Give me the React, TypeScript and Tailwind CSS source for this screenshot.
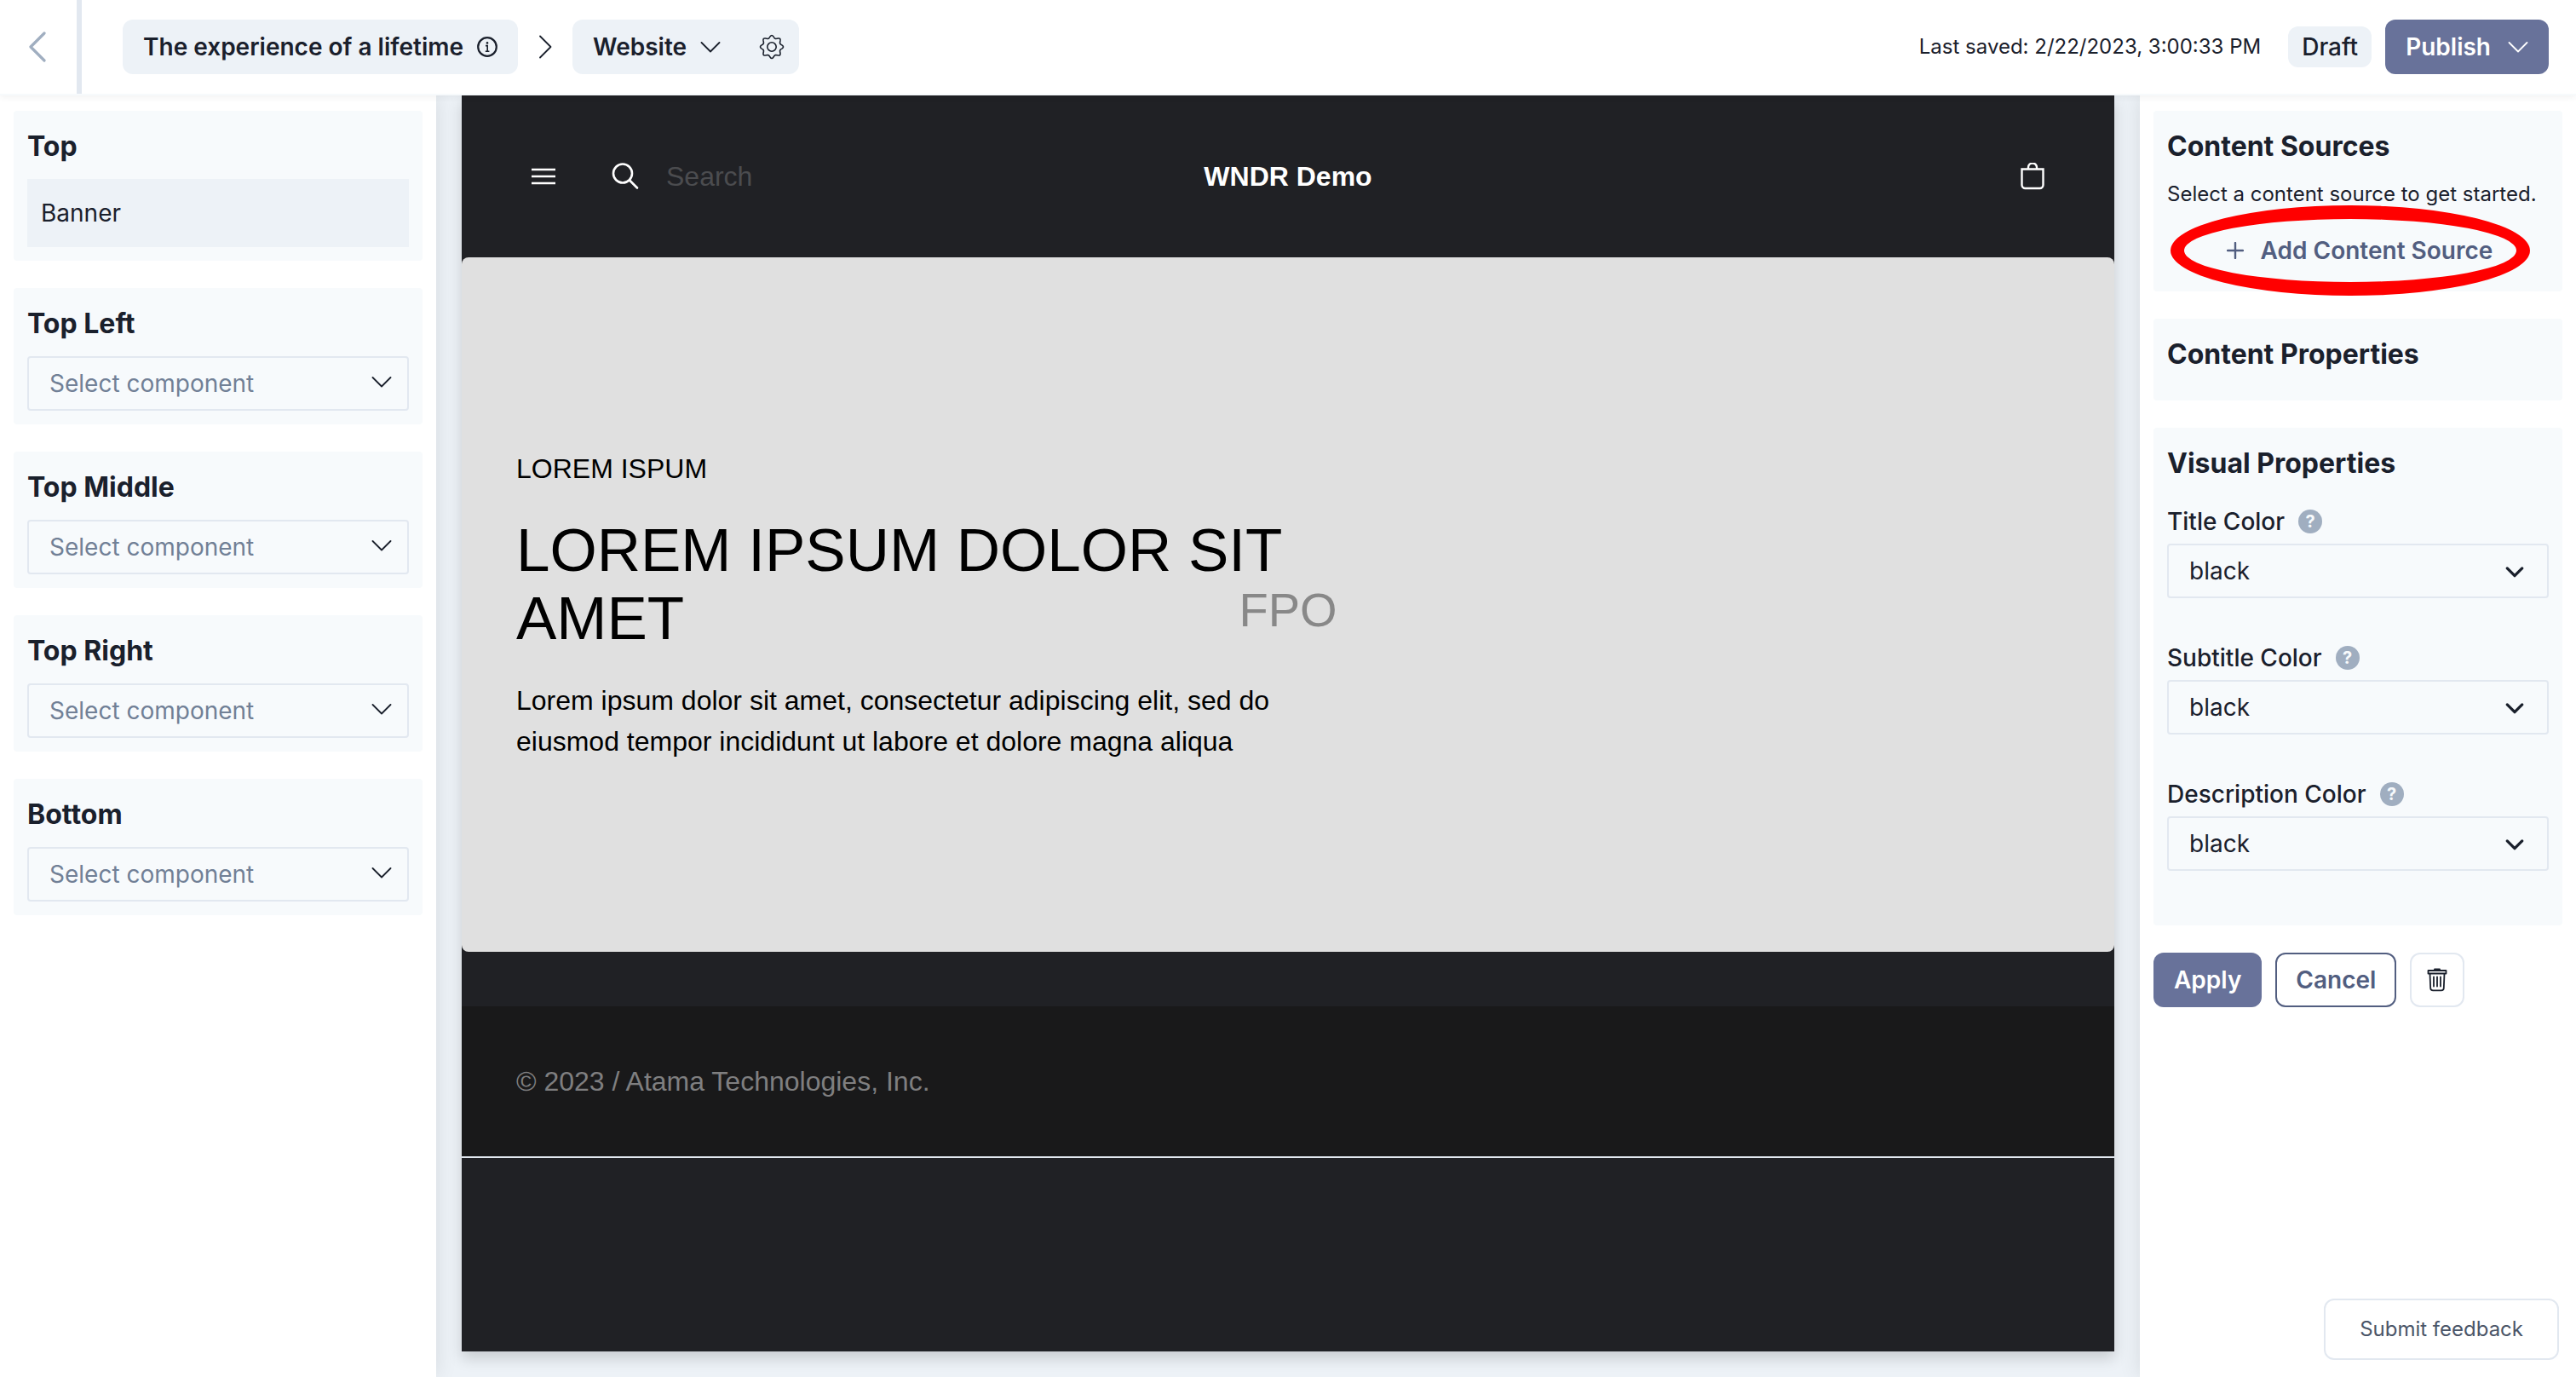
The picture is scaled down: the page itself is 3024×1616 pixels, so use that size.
import React from "react";

const HELVETICA = "font-['Liberation_Sans',Arial,sans-serif]";

function Chevron({ className, w }: { className: string; w: string }) {
  return (
    <svg aria-hidden="true" viewBox="0 0 24 13" fill="none" stroke="currentColor" strokeWidth={w} strokeLinecap="round" strokeLinejoin="round" className={className}>
      <path d="M1.500 1l10.500 10.500L22.500 1" />
    </svg>
  );
}

function Gear() {
  const pts: string[] = [];
  const n = 8;
  for (let i = 0; i < n; i++) {
    const a = (i * 2 * Math.PI) / n;
    const p = (r: number, d: number) => `${(16 + r * Math.sin(a + d)).toFixed(2)} ${(16 - r * Math.cos(a + d)).toFixed(2)}`;
    pts.push(`${i === 0 ? "M" : "L"}${p(10.6, -0.33)}Q${p(11.6, -0.2)} ${p(12.4, -0.15)}Q${p(14.8, 0)} ${p(12.4, 0.15)}Q${p(11.6, 0.2)} ${p(10.6, 0.33)}`);
  }
  return (
    <svg aria-hidden="true" viewBox="0 0 32 32" className="size-8" fill="none" stroke="currentColor" strokeWidth="1.6" strokeLinejoin="round">
      <path d={pts.join("") + "Z"} />
      <circle cx="16" cy="16" r="5.2" />
    </svg>
  );
}

function Card({ title, children, className = "" }: { title: string; children?: React.ReactNode; className?: string }) {
  return (
    <section className={`rounded bg-[#f7fafc] px-4 pt-4 ${className}`}>
      <h2 className="text-[32px] leading-[52px] font-bold">{title}</h2>
      {children}
    </section>
  );
}

function SlotCard({ title }: { title: string }) {
  return (
    <Card title={title} className="pb-4">
      <div className="relative mt-3">
        <select aria-label={title} className="h-16 w-full appearance-none rounded border-2 border-[#e2e8f0] bg-transparent px-6 text-[28px] text-[#718096]">
          <option>Select component</option>
        </select>
        <Chevron w="1.8" className="pointer-events-none absolute top-6 right-5 h-[13px] w-6" />
      </div>
    </Card>
  );
}

function ColorField({ label }: { label: string }) {
  const id = label.toLowerCase().replace(" ", "-");
  return (
    <div className="mb-11">
      <div className="flex h-[52px] items-center gap-4">
        <label htmlFor={id} className="text-[28px] font-medium">{label}</label>
        <button type="button" aria-label={`About ${label}`} className="flex size-7 items-center justify-center rounded-full bg-[#a0aec0] text-xl font-bold text-[#f7fafc]">?</button>
      </div>
      <div className="relative">
        <select id={id} className="h-16 w-full appearance-none rounded border-2 border-[#e2e8f0] bg-transparent px-6 text-[28px]">
          <option>black</option>
          <option>white</option>
        </select>
        <Chevron w="4" className="pointer-events-none absolute top-7 right-[30px] h-[11px] w-5 overflow-visible" />
      </div>
    </div>
  );
}

function Header() {
  return (
    <header className="relative z-10 flex h-28 items-center border-b-2 border-[#f7fafc] bg-white pr-8 shadow-[0_2px_8px_rgba(0,0,0,0.06)]">
      <a href="#back" aria-label="Back" className="flex h-full w-24 shrink-0 items-center justify-center border-r-6 border-[#e2e8f0] text-[#a0aec0]">
        <svg aria-hidden="true" viewBox="0 0 22 36" className="h-9 w-[22px]" fill="none" stroke="currentColor" strokeWidth="3.2" strokeLinecap="round" strokeLinejoin="round">
          <path d="M18 2L2 18l16 16" />
        </svg>
      </a>
      <nav aria-label="Breadcrumb" className="ml-12 flex items-center text-[28px] font-semibold">
        <button type="button" className="flex h-16 items-center gap-4 rounded-xl bg-[#edf2f7] px-6">
          The experience of a lifetime
          <svg aria-hidden="true" viewBox="0 0 24 24" className="size-6" fill="none" stroke="currentColor" strokeWidth="2.2">
            <circle cx="12" cy="12" r="10.8" />
            <path d="M10 10.600h2.200v6.600M9.800 17.200h4.600" strokeWidth="1.600" />
            <circle cx="12" cy="7.400" r="1.300" fill="currentColor" stroke="none" />
          </svg>
        </button>
        <svg aria-hidden="true" viewBox="0 0 16 28" className="mx-6 h-7 w-4" fill="none" stroke="currentColor" strokeWidth="1.8" strokeLinecap="round" strokeLinejoin="round">
          <path d="M2 1.500l12.500 12.500L2 26.500" />
        </svg>
        <div className="flex h-16 items-center rounded-xl bg-[#edf2f7] pr-4 pl-6">
          <button type="button" className="flex items-center gap-4">
            Website
            <Chevron w="1.8" className="h-[13px] w-6" />
          </button>
          <button type="button" aria-label="Settings" className="ml-11"><Gear /></button>
        </div>
      </nav>
      <div className="ml-auto flex items-center text-[28px]">
        <p className="text-2xl">Last saved: 2/22/2023, 3:00:33 PM</p>
        <span className="ml-8 flex h-12 items-center rounded-xl bg-[#edf2f7] px-4 font-medium">Draft</span>
        <button type="button" className="ml-4 flex h-16 items-center gap-5 rounded-xl bg-[#68729a] px-6 font-semibold text-white">
          Publish
          <Chevron w="1.8" className="h-[13px] w-6" />
        </button>
      </div>
    </header>
  );
}

function Preview() {
  return (
    <div className={`flex flex-1 flex-col bg-[#202125] text-[32px] shadow-[0_8px_16px_rgba(0,0,0,0.16)] ${HELVETICA}`}>
      <div className="grid h-[190px] grid-cols-3 items-center px-20 text-white">
        <div className="flex items-center">
          <button type="button" aria-label="Menu">
            <svg aria-hidden="true" viewBox="0 0 32 32" className="size-8" stroke="currentColor" strokeWidth="2.5">
              <path d="M2 8h28M2 16h28M2 24h28" />
            </svg>
          </button>
          <svg aria-hidden="true" viewBox="0 0 32 32" className="ml-16 size-8" fill="none" stroke="currentColor" strokeWidth="2.6" strokeLinecap="round">
            <circle cx="13" cy="12.500" r="11" />
            <path d="M21 20.500l9 9" />
          </svg>
          <input type="search" aria-label="Search" placeholder="Search" className="ml-8 w-60 bg-transparent outline-none placeholder:text-[#4b4c4f]" />
        </div>
        <p className="text-center font-bold">WNDR Demo</p>
        <button type="button" aria-label="Shopping bag" className="justify-self-end">
          <svg aria-hidden="true" viewBox="0 0 32 32" className="size-8" fill="none" stroke="currentColor" strokeWidth="2.4">
            <path d="M3.500 7.500h25v18.500a4 4 0 0 1-4 4h-17a4 4 0 0 1-4-4zM11 7.500V5.500a5 5 0 0 1 10 0v2" />
          </svg>
        </button>
      </div>
      <div className="relative flex h-[815px] flex-col justify-center rounded-lg bg-[#e0e0e0] px-16 text-black">
        <p className="absolute inset-0 flex items-center justify-center pt-3 text-[56px] leading-none text-[#888888]">FPO</p>
        <div className="relative w-[52%]">
          <p className="leading-12">LOREM ISPUM</p>
          <h1 className="mt-8 text-[71px] leading-20">LOREM IPSUM DOLOR SIT AMET</h1>
          <p className="mt-8 leading-12">Lorem ipsum dolor sit amet, consectetur adipiscing elit, sed do eiusmod tempor incididunt ut labore et dolore magna aliqua</p>
        </div>
      </div>
      <footer className="mt-16 flex h-[178px] items-center border-b-2 border-[#e2e8f0] bg-[#19191a] px-16 text-[#7f7f80]">
        © 2023 / Atama Technologies, Inc.
      </footer>
    </div>
  );
}

export default function App() {
  return (
    <div className="flex min-h-screen flex-col bg-white font-[Inter,sans-serif] text-[#1a202c]">
      <Header />
      <div className="flex flex-1">
        <aside className="relative flex w-[512px] shrink-0 flex-col gap-8 bg-white px-4 py-[18px] shadow-[0_0_24px_rgba(0,0,0,0.1)]">
          <Card title="Top" className="pb-4">
            <button type="button" className="mt-3 h-20 w-full bg-[#edf2f7] px-4 text-left text-[28px]">Banner</button>
          </Card>
          <SlotCard title="Top Left" />
          <SlotCard title="Top Middle" />
          <SlotCard title="Top Right" />
          <SlotCard title="Bottom" />
        </aside>
        <main className="flex min-w-0 flex-1 flex-col bg-[#edf2f7] px-[30px] pb-[30px]">
          <Preview />
        </main>
        <aside className="relative flex w-[512px] shrink-0 flex-col gap-8 bg-white px-4 py-[18px] shadow-[0_0_24px_rgba(0,0,0,0.1)]">
          <Card title="Content Sources" className="pb-4">
            <p className="mt-2.5 text-2xl leading-10">Select a content source to get started.</p>
            <div className="relative mt-3.5">
              <button type="button" className="flex h-16 w-full items-center justify-center gap-5 pl-1 text-[28px] font-semibold text-[#525e80]">
                <svg aria-hidden="true" viewBox="0 0 20 20" className="size-5" stroke="currentColor" strokeWidth="2.4" strokeLinecap="round">
                  <path d="M10 1v18M1 10h18" />
                </svg>
                Add Content Source
              </button>
              <span className="pointer-events-none absolute -inset-y-[21px] left-1 w-[422px] rounded-[50%] border-16 border-[#ff0000]" />
            </div>
          </Card>
          <Card title="Content Properties" className="pb-7" />
          <Card title="Visual Properties" className="pb-5">
            <div className="flex flex-col pt-4">
              <ColorField label="Title Color" />
              <ColorField label="Subtitle Color" />
              <ColorField label="Description Color" />
            </div>
          </Card>
          <div className="flex gap-4 text-[28px] font-semibold">
            <button type="button" className="h-16 rounded-xl bg-[#68729a] px-6 text-white">Apply</button>
            <button type="button" className="h-16 rounded-xl border-2 border-[#525e80] px-[22px] text-[#525e80]">Cancel</button>
            <button type="button" aria-label="Delete" className="flex size-16 items-center justify-center rounded-xl border-2 border-[#e2e8f0]">
              <svg aria-hidden="true" viewBox="0 0 28 28" className="size-7" fill="none" stroke="currentColor" strokeWidth="1.8" strokeLinecap="round" strokeLinejoin="round">
                <path d="M11 2.500V1.500h6v1M3.500 3h21v3.500h-21zM5.500 6.500l.7 17a3 3 0 0 0 3 2.900h9.600a3 3 0 0 0 3-2.900l.7-17M10 10.500v11M14 10.500v11M18 10.500v11" />
              </svg>
            </button>
          </div>
        </aside>
      </div>
      <button type="button" className="fixed right-5 bottom-5 h-[72px] rounded-xl border-2 border-[#e2e8f0] bg-white px-10 text-2xl text-[#4a5568]">Submit feedback</button>
    </div>
  );
}
